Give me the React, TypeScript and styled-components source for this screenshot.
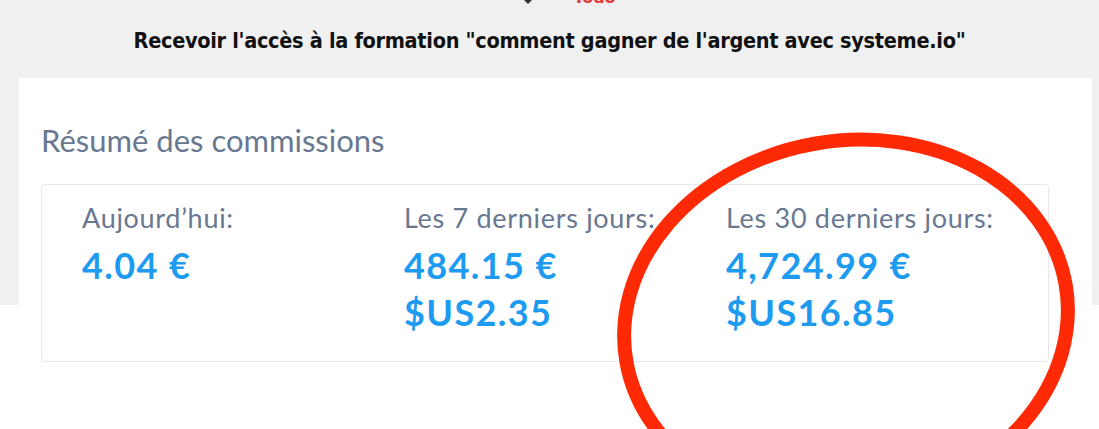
import React from "react";
import styled, { createGlobalStyle } from "styled-components";

const GlobalStyle = createGlobalStyle`
  html, body {
    margin: 0;
    padding: 0;
    background: #ffffff;
  }
  * {
    box-sizing: border-box;
  }
`;

type Stat = {
  label: string;
  values: string[];
};

const stats: Stat[] = [
  { label: "Aujourd’hui:", values: ["4.04 €"] },
  { label: "Les 7 derniers jours:", values: ["484.15 €", "$US2.35"] },
  { label: "Les 30 derniers jours:", values: ["4,724.99 €", "$US16.85"] },
];

const Page = styled.div`
  position: relative;
  width: 1099px;
  height: 429px;
  overflow: hidden;
  background: linear-gradient(to bottom, #f0f0f0 0, #f0f0f0 305px, #ffffff 305px);
  display: flex;
  flex-direction: column;
`;

// logo row of the page above, mostly scrolled out of view
const TopStrip = styled.div`
  height: 8px;
  overflow: hidden;
  display: flex;
  justify-content: center;
  align-items: flex-start;
  gap: 40px;
  padding-left: 40px;
`;

const Chevron = styled.span`
  width: 0;
  height: 0;
  margin-top: -1px;
  border-left: 5px solid transparent;
  border-right: 5px solid transparent;
  border-top: 5px solid #333333;
`;

const TopWord = styled.span`
  font-family: "DejaVu Sans", sans-serif;
  font-weight: 700;
  font-size: 16px;
  line-height: 16px;
  margin-top: -10px;
  color: #e23a3a;
`;

const Title = styled.h1`
  margin: 19px 0 0;
  text-align: center;
  font-family: "DejaVu Sans Condensed", "DejaVu Sans", sans-serif;
  font-stretch: condensed;
  font-weight: 600;
  font-size: 21.5px;
  line-height: 28px;
  color: #111111;
  letter-spacing: -0.3px;
`;

const Panel = styled.section`
  margin: 23px 7px 0 19px;
  background: #ffffff;
  padding: 44px 43px 0 22px;
`;

const PanelTitle = styled.h2`
  margin: 0;
  font-family: Lato, "Open Sans", sans-serif;
  font-weight: 400;
  font-size: 31px;
  line-height: 36px;
  color: #687890;
`;

const Card = styled.div`
  margin-top: 26px;
  height: 178px;
  border: 1px solid #e6e8ec;
  border-radius: 4px;
  padding: 17px 40px 0;
  display: grid;
  grid-template-columns: repeat(3, 322px);
`;

const Column = styled.div`
  display: flex;
  flex-direction: column;
`;

const Label = styled.div`
  font-family: Lato, "Open Sans", sans-serif;
  font-size: 27px;
  line-height: 32px;
  letter-spacing: 0.7px;
  color: #687890;
  margin-bottom: 8px;
`;

const Value = styled.div`
  font-family: Lato, "Open Sans", sans-serif;
  font-weight: 700;
  font-size: 36px;
  line-height: 47px;
  letter-spacing: 1.4px;
  color: #1d9bf0;
`;

const Overlay = styled.svg`
  position: absolute;
  left: 0;
  top: 0;
  pointer-events: none;
`;

export default function App() {
  return (
    <>
      <GlobalStyle />
      <Page>
        <TopStrip>
          <Chevron />
          <TopWord>Todo</TopWord>
        </TopStrip>
        <Title>
          Recevoir l'accès à la formation "comment gagner de l'argent avec
          systeme.io"
        </Title>
        <Panel>
          <PanelTitle>Résumé des commissions</PanelTitle>
          <Card>
            {stats.map((s) => (
              <Column key={s.label}>
                <Label>{s.label}</Label>
                {s.values.map((v) => (
                  <Value key={v}>{v}</Value>
                ))}
              </Column>
            ))}
          </Card>
        </Panel>
        <Overlay width="1099" height="429" viewBox="0 0 1099 429">
          <ellipse
            cx="846"
            cy="323"
            rx="223"
            ry="182"
            transform="rotate(-10 846 323)"
            fill="none"
            stroke="#fe2a05"
            strokeWidth="14"
          />
        </Overlay>
      </Page>
    </>
  );
}
